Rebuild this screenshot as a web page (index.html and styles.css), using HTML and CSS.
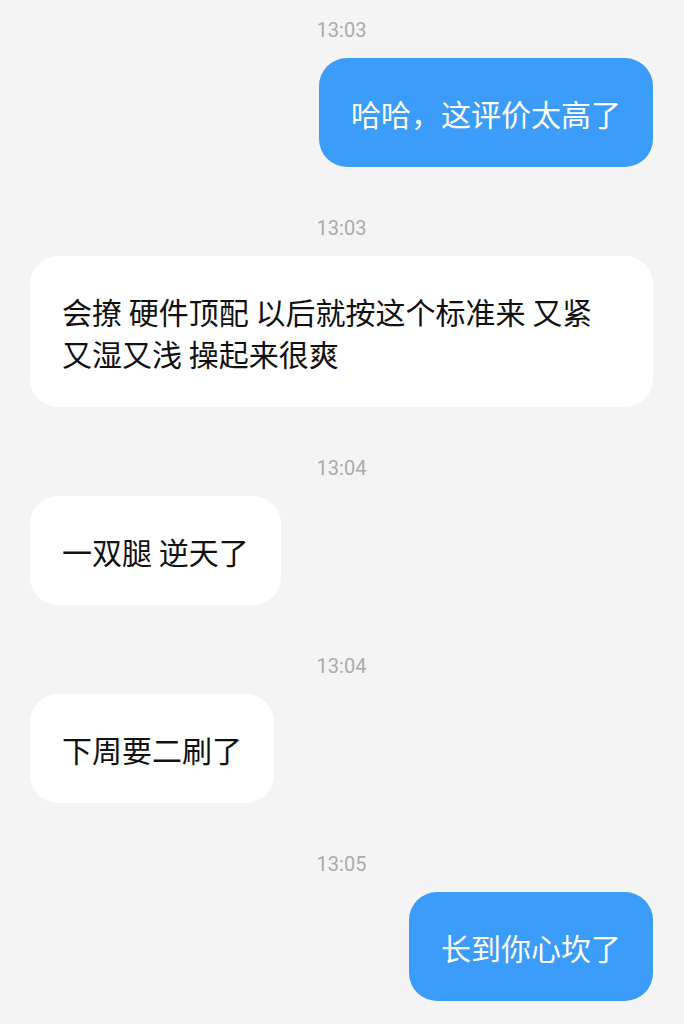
FILE: index.html
```html
<!DOCTYPE html>
<html lang="zh-CN">
<head>
  <meta charset="UTF-8" />
  <meta name="viewport" content="width=device-width, initial-scale=1.0"/>
  <title>聊天</title>
  <link rel="stylesheet" href="styles.css">
</head>
<body>
  <div class="chat">
    <div class="time">13:03</div>
    <div class="row row-me">
      <div class="bubble bubble-me">哈哈，这评价太高了</div>
    </div>

    <div class="time">13:03</div>
    <div class="row">
      <div class="bubble">会撩 硬件顶配 以后就按这个标准来 又紧又湿又浅 操起来很爽</div>
    </div>

    <div class="time">13:04</div>
    <div class="row">
      <div class="bubble">一双腿 逆天了</div>
    </div>

    <div class="time">13:04</div>
    <div class="row">
      <div class="bubble">下周要二刷了</div>
    </div>

    <div class="time">13:05</div>
    <div class="row row-me">
      <div class="bubble bubble-me">长到你心坎了</div>
    </div>
  </div>
</body>
</html>
```

FILE: styles.css
```css
body {
  margin: 0;
  padding: 0;
  background-color: #f4f4f4;
  font-family: "Noto Sans CJK SC", "Noto Sans", sans-serif;
  color: #111;
}
.chat {
  padding: 0 31px 0 30px;
}
.time {
  height: 20px;
  line-height: 20px;
  margin: 51px 0 18px 0;
  text-align: center;
  font-family: Roboto, "Noto Sans", sans-serif;
  font-size: 20px;
  color: #ababab;
}
.time:first-child {
  margin-top: 20px;
}
.row {
  display: flex;
  justify-content: flex-start;
}
.row-me {
  justify-content: flex-end;
}
.bubble {
  background-color: #ffffff;
  border-radius: 28px;
  padding: 34px 32px 33px 32px;
  font-size: 30px;
  line-height: 42px;
  max-width: 100%;
  box-sizing: border-box;
}
.bubble-me {
  background-color: #3b9cfa;
  color: #ffffff;
}
```
